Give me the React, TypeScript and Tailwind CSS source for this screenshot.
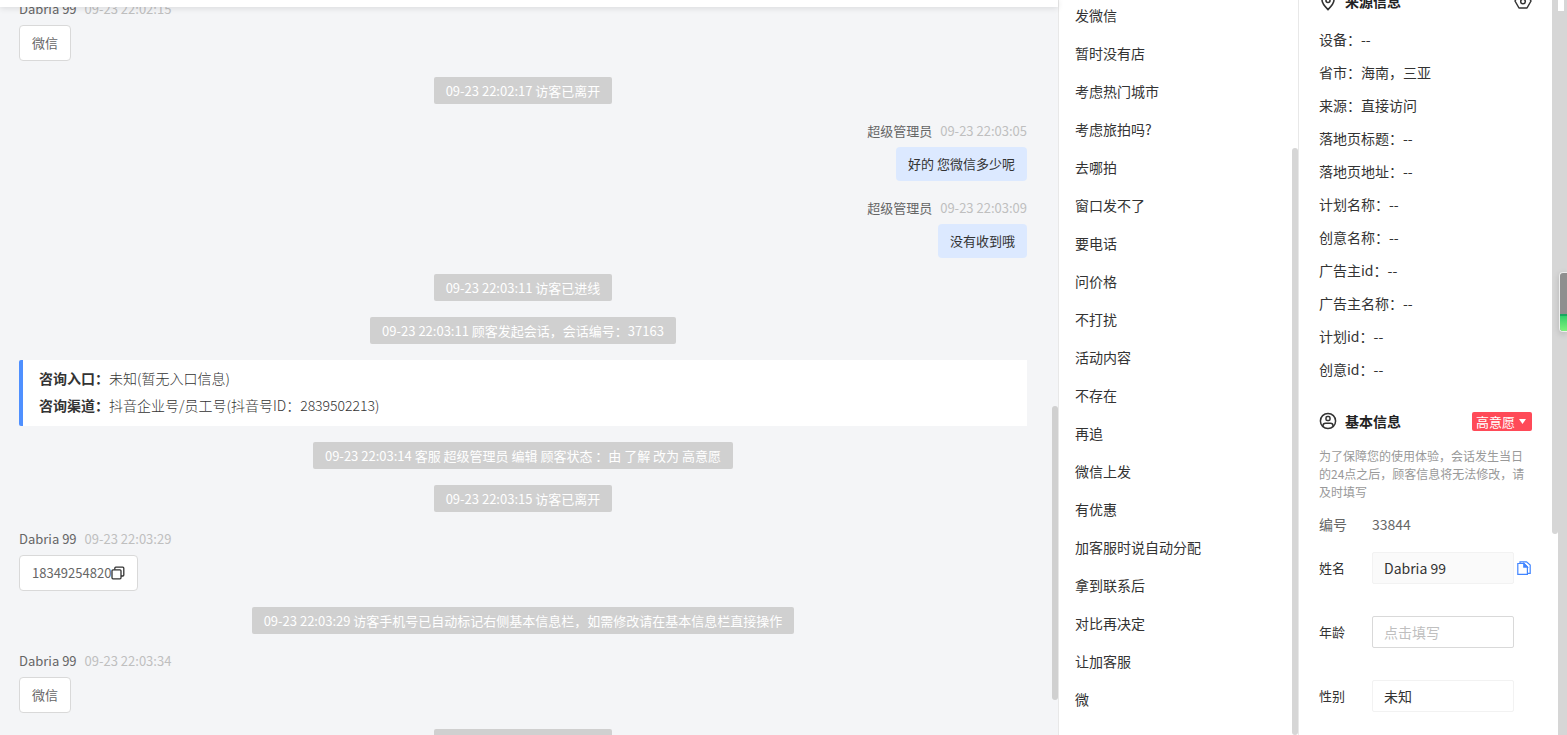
import type { ReactNode } from "react";

type Message =
  | { kind: "notice"; text: string }
  | { kind: "visitor"; name: string; time: string; text: string; copyable?: boolean }
  | { kind: "agent"; name: string; time: string; text: string }
  | { kind: "entry" };

const messages: Message[] = [
  { kind: "visitor", name: "Dabria 99", time: "09-23 22:02:15", text: "微信" },
  { kind: "notice", text: "09-23 22:02:17 访客已离开" },
  { kind: "agent", name: "超级管理员", time: "09-23 22:03:05", text: "好的 您微信多少呢" },
  { kind: "agent", name: "超级管理员", time: "09-23 22:03:09", text: "没有收到哦" },
  { kind: "notice", text: "09-23 22:03:11 访客已进线" },
  { kind: "notice", text: "09-23 22:03:11 顾客发起会话，会话编号：37163" },
  { kind: "entry" },
  { kind: "notice", text: "09-23 22:03:14 客服 超级管理员 编辑 顾客状态 ：由 了解 改为 高意愿" },
  { kind: "notice", text: "09-23 22:03:15 访客已离开" },
  { kind: "visitor", name: "Dabria 99", time: "09-23 22:03:29", text: "18349254820", copyable: true },
  { kind: "notice", text: "09-23 22:03:29 访客手机号已自动标记右侧基本信息栏，如需修改请在基本信息栏直接操作" },
  { kind: "visitor", name: "Dabria 99", time: "09-23 22:03:34", text: "微信" },
  { kind: "notice", text: "09-23 22:03:36 访客已离开" },
];

const quickReplies = [
  "发微信", "暂时没有店", "考虑热门城市", "考虑旅拍吗?", "去哪拍", "窗口发不了", "要电话",
  "问价格", "不打扰", "活动内容", "不存在", "再追", "微信上发", "有优惠",
  "加客服时说自动分配", "拿到联系后", "对比再决定", "让加客服", "微",
];

const sourceInfo: [string, string][] = [
  ["设备", "--"],
  ["省市", "海南，三亚"],
  ["来源", "直接访问"],
  ["落地页标题", "--"],
  ["落地页地址", "--"],
  ["计划名称", "--"],
  ["创意名称", "--"],
  ["广告主id", "--"],
  ["广告主名称", "--"],
  ["计划id", "--"],
  ["创意id", "--"],
];

function CopyIcon() {
  return (
    <svg width="14" height="14" viewBox="0 0 14 14" fill="none" stroke="#333" strokeWidth="1.3">
      <rect x="1" y="3.800" width="9" height="9" rx="1" />
      <path d="M3.800 3.800V2.200a1 1 0 0 1 1-1h7a1 1 0 0 1 1 1V9a1 1 0 0 1-1 1H10" />
    </svg>
  );
}

function Meta({ name, time }: { name: string; time: string }) {
  return (
    <div className="flex h-[27px] gap-2 leading-[22px]">
      <span className="text-[#666]">{name}</span>
      <time className="text-[#bfbfbf]">{time}</time>
    </div>
  );
}

function MessageRow({ message }: { message: Message }) {
  switch (message.kind) {
    case "notice":
      return (
        <li className="flex shrink-0 justify-center">
          <p className="h-[27px] whitespace-nowrap rounded-[2px] bg-[#d0d0d0] px-3 leading-[27px] text-white">
            {message.text}
          </p>
        </li>
      );
    case "visitor":
      return (
        <li className="flex shrink-0 flex-col items-start">
          <Meta name={message.name} time={message.time} />
          <div className="flex h-9 items-center rounded border border-[#d9d9d9] bg-white px-3 text-[#666]">
            {message.text}
            {message.copyable && (
              <button type="button" aria-label="复制">
                <CopyIcon />
              </button>
            )}
          </div>
        </li>
      );
    case "agent":
      return (
        <li className="flex shrink-0 flex-col items-end">
          <Meta name={message.name} time={message.time} />
          <div className="h-[34px] rounded bg-[#dce9ff] px-3 leading-[34px] text-[#333]">{message.text}</div>
        </li>
      );
    case "entry":
      return (
        <li className="shrink-0 rounded-l-[2px] border-l-4 border-[#4f90ff] bg-white px-4 pb-[7px] pt-[5px] text-sm leading-[27px] text-[#333]">
          <p>
            <strong>咨询入口：</strong>
            <span className="font-light">未知(暂无入口信息)</span>
          </p>
          <p>
            <strong>咨询渠道：</strong>
            <span className="font-light">抖音企业号/员工号(抖音号ID：2839502213)</span>
          </p>
        </li>
      );
  }
}

function SectionHeading({ icon, title, action }: { icon: ReactNode; title: string; action: ReactNode }) {
  return (
    <div className="flex h-[22px] items-center">
      {icon}
      <h2 className="ml-2 flex-1 text-sm font-bold leading-[22px] text-[#222]">{title}</h2>
      {action}
    </div>
  );
}

export default function App() {
  return (
    <div className="relative flex h-screen overflow-hidden bg-white font-['Noto_Sans_CJK_SC',sans-serif] text-[13px] text-[#333]">
      <main className="relative flex min-w-0 flex-1 flex-col bg-[#f4f5f7]">
        <div className="relative z-10 h-[7px] shrink-0 bg-white shadow-[0_1px_6px_rgba(0,0,0,0.12)]" />
        <ul className="-mt-[9px] flex min-h-0 flex-1 flex-col gap-4 overflow-hidden pl-[19px] pr-[31px]">
          {messages.map((message, i) => (
            <MessageRow key={i} message={message} />
          ))}
        </ul>
        <div className="absolute right-0 top-[406px] h-[294px] w-1.5 rounded-full bg-[#d0d0d0]" />
      </main>

      <nav className="relative w-[241px] shrink-0 overflow-hidden border-x border-[#e8e8e8]">
        <ul className="-mt-1 text-sm">
          {quickReplies.map((reply) => (
            <li key={reply}>
              <button type="button" className="block h-[38px] w-full px-4 text-left">
                {reply}
              </button>
            </li>
          ))}
        </ul>
        <div className="absolute bottom-0 right-0 top-[148px] w-1.5 rounded-full bg-[#d6d6d6]" />
      </nav>

      <aside className="relative w-[259px] shrink-0 overflow-hidden pl-5 pr-[26px]">
        <div className="-mt-2.5">
          <SectionHeading
            icon={
              <svg width="18" height="20" viewBox="0 0 18 20" fill="none" stroke="#333" strokeWidth="1.6">
                <path d="M9 18.600C5.200 14.800 3 12 3 9a6 6 0 0 1 12 0c0 3-2.200 5.800-6 9.600z" />
                <circle cx="9" cy="9.500" r="2" />
              </svg>
            }
            title="来源信息"
            action={
              <button type="button" aria-label="设置">
                <svg width="18" height="18" viewBox="0 0 18 18" fill="none" stroke="#333" strokeWidth="1.5">
                  <path d="M5 2h8l4 7-4 7H5L1 9z" strokeLinejoin="round" />
                  <circle cx="9" cy="9.500" r="2.300" />
                </svg>
              </button>
            }
          />
        </div>
        <dl className="mt-2.5 text-sm">
          {sourceInfo.map(([label, value]) => (
            <div key={label} className="flex h-[33px] items-center">
              <dt>{label}：</dt>
              <dd>{value}</dd>
            </div>
          ))}
        </dl>
        <div className="mt-[25px]">
          <SectionHeading
            icon={
              <svg width="18" height="18" viewBox="0 0 18 18" fill="none" stroke="#333" strokeWidth="1.5">
                <circle cx="9" cy="9" r="7.600" />
                <rect x="7" y="4.600" width="4" height="4" rx="1.300" />
                <path d="M4 14.500v-.7a2.500 2.500 0 0 1 2.500-2.500h5a2.500 2.500 0 0 1 2.500 2.500v.7" />
              </svg>
            }
            title="基本信息"
            action={
              <button
                type="button"
                className="flex h-[19px] items-center rounded-[2px] bg-[#ff4a58] pl-1 pr-1.5 text-[13px] leading-[19px] text-white"
              >
                高意愿
                <svg className="ml-1" width="7" height="5" viewBox="0 0 7 5" fill="#fff">
                  <path d="M0 0h7L3.500 5z" />
                </svg>
              </button>
            }
          />
        </div>
        <p className="mt-[15px] text-xs leading-[18px] text-[#999]">
          为了保障您的使用体验，会话发生当日的24点之后，顾客信息将无法修改，请及时填写
        </p>
        <div className="mt-3 flex h-[22px] items-center text-sm text-[#666]">
          <span className="w-[53px]">编号</span>
          <span>33844</span>
        </div>
        <form className="mt-[17px] flex flex-col gap-8">
          <div className="flex h-8 items-center">
            <label htmlFor="name" className="w-[53px] shrink-0">姓名</label>
            <input
              id="name"
              defaultValue="Dabria 99"
              className="h-8 w-[142px] rounded-[2px] border border-[#f2f2f2] bg-[#fafafa] px-[11px] text-sm"
            />
            <button type="button" aria-label="复制姓名" className="ml-[3px]">
              <svg width="14" height="14" viewBox="0 0 14 14" fill="none" stroke="#4285ff" strokeWidth="1.200">
                <path d="M.8 2.500H7L10.400 6v7.400H.8z" />
                <path d="M6.800 2.500v3.600h3.600z" fill="#4285ff" />
                <path d="M3 2.500V.8h6.500L13.200 4v8.400h-2.800" />
              </svg>
            </button>
          </div>
          <div className="flex h-8 items-center">
            <label htmlFor="age" className="w-[53px] shrink-0">年龄</label>
            <input
              id="age"
              placeholder="点击填写"
              className="h-8 w-[142px] rounded-[2px] border border-[#d9d9d9] px-[11px] text-sm placeholder:text-[#bfbfbf]"
            />
          </div>
          <div className="flex h-8 items-center">
            <label htmlFor="gender" className="w-[53px] shrink-0">性别</label>
            <select
              id="gender"
              className="h-8 w-[142px] appearance-none rounded-[2px] border border-[#f2f2f2] bg-white px-[11px] text-sm"
            >
              <option>未知</option>
            </select>
          </div>
        </form>
        <div className="absolute right-0 top-0 h-[534px] w-1.5 rounded-b-full bg-[#d6d6d6]" />
      </aside>

      <div className="relative w-[9px] shrink-0 bg-[#d6d6d6]">
        <div className="absolute left-0 top-0 h-[11px] w-1.5 bg-white" />
        <div className="absolute right-0 top-[272px] flex h-[60px] w-2 flex-col overflow-hidden rounded-l border border-r-0 border-[#eee] bg-[#8f8f8f] shadow-[0_2px_6px_rgba(0,0,0,0.15)]">
          <div className="mt-auto h-[17px] border-t-2 border-[#18a860] bg-linear-to-b from-[#2fcf6b] to-[#7cf27c]" />
        </div>
      </div>
    </div>
  );
}
